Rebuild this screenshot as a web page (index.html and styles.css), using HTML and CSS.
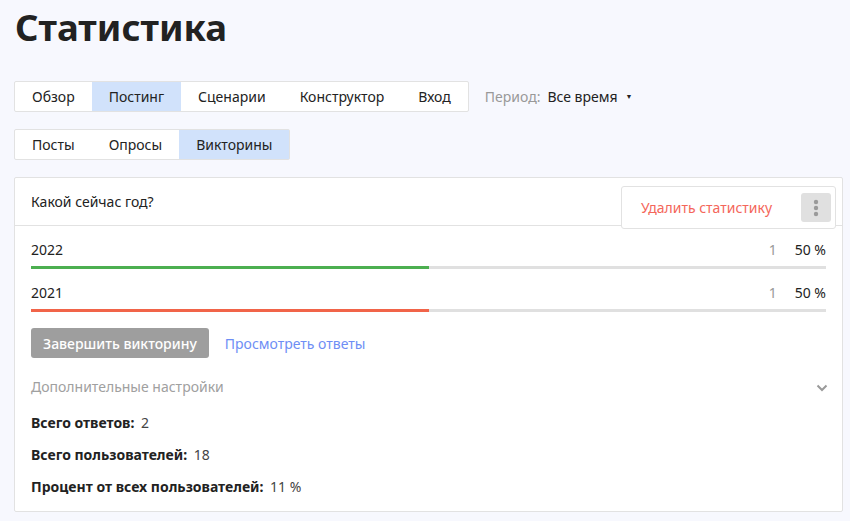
FILE: index.html
```html
<!DOCTYPE html>
<html lang="ru">
<head>
<meta charset="utf-8">
<link rel="stylesheet" href="styles.css">
</head>
<body>
<div class="page">
  <h1 class="title">Статистика</h1>

  <div class="toolbar">
    <div class="tabs">
      <div class="tab">Обзор</div>
      <div class="tab active">Постинг</div>
      <div class="tab">Сценарии</div>
      <div class="tab">Конструктор</div>
      <div class="tab">Вход</div>
    </div>
    <div class="period">
      <span class="period-label">Период:</span>
      <span class="period-value">Все время</span>
      <span class="caret">▼</span>
    </div>
  </div>

  <div class="toolbar sub">
    <div class="tabs">
      <div class="tab">Посты</div>
      <div class="tab">Опросы</div>
      <div class="tab active">Викторины</div>
    </div>
  </div>

  <div class="card">
    <div class="card-header">Какой сейчас год?</div>

    <div class="menu">
      <span class="menu-item">Удалить статистику</span>
      <span class="menu-btn">
        <svg width="6" height="18" viewBox="0 0 6 18"><circle cx="3" cy="3" r="2.2" fill="#9a9a9a"/><circle cx="3" cy="9" r="2.2" fill="#9a9a9a"/><circle cx="3" cy="15" r="2.2" fill="#9a9a9a"/></svg>
      </span>
    </div>

    <div class="card-body">
      <div class="option">
        <div class="option-row">
          <span class="option-name">2022</span>
          <span class="option-count">1</span>
          <span class="option-pct">50 %</span>
        </div>
        <div class="bar"><div class="bar-fill green" style="width:50%"></div></div>
      </div>
      <div class="option">
        <div class="option-row">
          <span class="option-name">2021</span>
          <span class="option-count">1</span>
          <span class="option-pct">50 %</span>
        </div>
        <div class="bar"><div class="bar-fill red" style="width:50%"></div></div>
      </div>

      <div class="actions">
        <button class="btn">Завершить викторину</button>
        <span class="link">Просмотреть ответы</span>
      </div>

      <div class="extra">
        <span>Дополнительные настройки</span>
        <svg class="chevron" width="12" height="8" viewBox="0 0 12 8"><path d="M1.5 1.5 L6 6 L10.5 1.5" fill="none" stroke="#9a9a9a" stroke-width="2"/></svg>
      </div>

      <div class="stats">
        <div class="stat"><b>Всего ответов:</b> <span>2</span></div>
        <div class="stat"><b>Всего пользователей:</b> <span>18</span></div>
        <div class="stat"><b>Процент от всех пользователей:</b> <span>11 %</span></div>
      </div>
    </div>
  </div>
</div>
</body>
</html>
```

FILE: styles.css
```css
html, body {
  margin: 0;
  padding: 0;
  background: #f7f8fe;
  font-family: "Noto Sans", "Open Sans", sans-serif;
  color: #222;
}

.page {
  padding: 4px 7px 0 14px;
}

.title {
  margin: 0 0 0 1px;
  font-size: 36.5px;
  line-height: 46px;
  font-weight: 700;
  color: #222;
}

.toolbar {
  display: flex;
  align-items: center;
  margin-top: 31px;
}

.toolbar.sub {
  margin-top: 17px;
}

.tabs {
  display: flex;
  background: #fff;
  border: 1px solid #e2e2e2;
  border-radius: 2px;
  height: 29px;
}

.tab {
  padding: 0 17px;
  font-size: 14px;
  line-height: 29px;
  color: #222;
}

.tab.active {
  background: #d1e2fb;
}

.period {
  margin-left: 16px;
  font-size: 14px;
  display: flex;
  align-items: center;
}

.period-label {
  color: #999;
  margin-right: 7px;
}

.period-value {
  color: #222;
}

.caret {
  font-size: 7px;
  margin-left: 8px;
  color: #222;
}

.card {
  position: relative;
  margin-top: 17px;
  background: #fff;
  border: 1px solid #e2e2e2;
  border-radius: 2px;
}

.card-header {
  height: 47px;
  line-height: 47px;
  padding: 0 16px;
  font-size: 14px;
  border-bottom: 1px solid #e2e2e2;
}

.menu {
  position: absolute;
  top: 8px;
  right: 6px;
  box-sizing: border-box;
  width: 215px;
  height: 43px;
  background: #fff;
  border: 1px solid #e2e2e2;
  border-radius: 3px;
  display: flex;
  align-items: center;
  justify-content: space-between;
  padding: 0 4px 0 19px;
}

.menu-item {
  color: #f4665a;
  font-size: 14px;
}

.menu-btn {
  width: 30px;
  height: 29px;
  background: #e0e0e0;
  border-radius: 3px;
  display: flex;
  align-items: center;
  justify-content: center;
}

.card-body {
  padding: 13px 14px 13px 16px;
}

.option {
  margin-right: 2px;
  margin-bottom: 13px;
}

.option-row {
  display: flex;
  align-items: center;
  height: 20px;
  font-size: 14px;
}

.option-name {
  flex: 1;
}

.option-count {
  color: #999;
  margin-right: 18px;
}

.bar {
  margin-top: 7px;
  height: 3px;
  background: #e0e0e0;
}

.bar-fill {
  height: 3px;
}

.bar-fill.green { background: #4caf50; }
.bar-fill.red { background: #f16449; }

.actions {
  display: flex;
  align-items: center;
  margin-top: 16px;
}

.btn {
  height: 30px;
  padding: 0 12px;
  border: none;
  border-radius: 3px;
  background: #9e9e9e;
  color: #fff;
  font-family: inherit;
  font-size: 14px;
  font-weight: 500;
}

.link {
  margin-left: 16px;
  color: #6e8ef5;
  font-size: 14px;
}

.extra {
  display: flex;
  justify-content: space-between;
  align-items: center;
  margin-top: 17px;
  height: 22px;
  color: #a0a0a0;
  font-size: 14px;
}

.chevron {
  margin-top: 3px;
}

.stats {
  margin-top: 15px;
  display: flex;
  flex-direction: column;
  gap: 10px;
}

.stat {
  height: 22px;
  line-height: 22px;
  font-size: 14px;
  color: #444;
}

.stat b {
  color: #222;
  font-weight: 700;
  margin-right: 3px;
}
```
